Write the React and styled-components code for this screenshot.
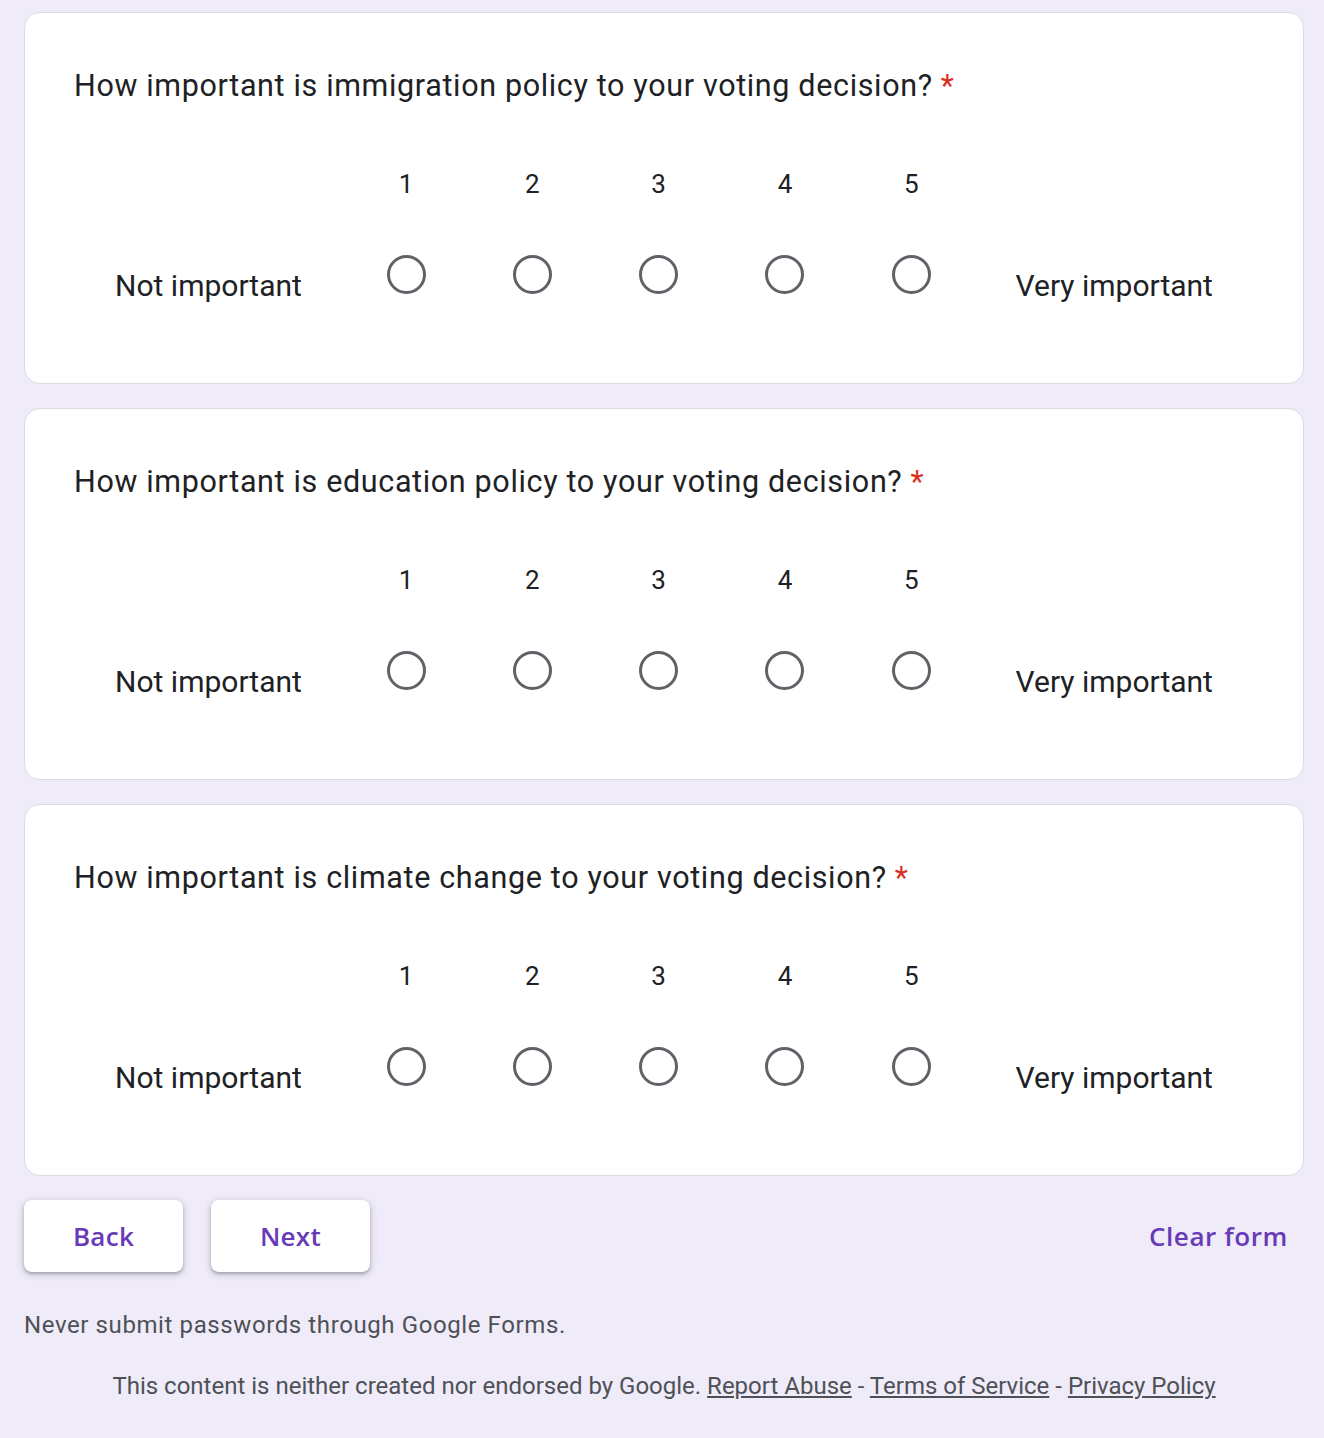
import React from "react";
import styled, { createGlobalStyle } from "styled-components";

const GlobalStyle = createGlobalStyle`
  html, body {
    margin: 0;
    padding: 0;
    background: #f0ebf8;
  }
  body {
    font-family: Roboto, "Liberation Sans", Arial, sans-serif;
    color: #202124;
  }
`;

const Page = styled.div`
  width: 1280px;
  margin-left: 24px;
  padding-top: 12px;
  padding-bottom: 30px;
`;

const Card = styled.div`
  background: #fff;
  border: 1px solid #dadce0;
  border-radius: 16px;
  padding: 50px 49px 62px 49px;
  margin-bottom: 24px;
  box-sizing: border-box;
  height: 372px;
`;

const Title = styled.div`
  font-size: 30.5px;
  line-height: 45px;
  letter-spacing: 0.65px;
  color: #202124;
`;

const Star = styled.span`
  color: #d93025;
  margin-left: 8px;
`;

const Scale = styled.div`
  display: flex;
  margin-top: 55px;
`;

const EndLabel = styled.div`
  flex: 1 1 auto;
  align-self: flex-end;
  margin-bottom: 12px;
  text-align: center;
  font-size: 30px;
  line-height: 45px;
  white-space: nowrap;
`;

const Column = styled.div`
  width: 126.3px;
  flex: none;
  display: flex;
  flex-direction: column;
  align-items: center;
`;

const Number = styled.div`
  font-size: 26px;
  line-height: 40px;
  height: 40px;
  margin-top: 1px;
`;

const RadioCell = styled.div`
  height: 92px;
  margin-top: 24px;
  display: flex;
  align-items: center;
  justify-content: center;
`;

const Radio = styled.div`
  width: 39px;
  height: 39px;
  border: 3.8px solid #5f6368;
  border-radius: 50%;
  box-sizing: border-box;
`;

const Actions = styled.div`
  display: flex;
  align-items: center;
  margin-top: 24px;
  gap: 28px;
`;

const Button = styled.button`
  height: 72px;
  min-width: 159px;
  padding: 0 48px;
  border: none;
  border-radius: 8px;
  background: #fff;
  color: #673ab7;
  font-family: "Open Sans", Roboto, sans-serif;
  font-weight: 600;
  font-size: 26px;
  letter-spacing: 0.3px;
  box-shadow: 0 2px 3px rgba(60, 64, 67, 0.3), 0 2px 6px 2px rgba(60, 64, 67, 0.15);
  cursor: pointer;
`;

const ClearButton = styled.button`
  margin-left: auto;
  margin-right: 16px;
  border: none;
  background: transparent;
  color: #673ab7;
  font-family: "Open Sans", Roboto, sans-serif;
  font-weight: 600;
  font-size: 26px;
  padding: 0;
  letter-spacing: 0.6px;
`;

const Warning = styled.div`
  margin-top: 39px;
  font-size: 24px;
  line-height: 28px;
  color: #4d5156;
  letter-spacing: 0.6px;
`;

const Footer = styled.div`
  margin-top: 33px;
  text-align: center;
  font-size: 24px;
  line-height: 28px;
  color: #4d5156;
`;

const FooterLink = styled.a`
  color: #4d5156;
  text-decoration: underline;
`;

const questions = [
  "How important is immigration policy to your voting decision?",
  "How important is education policy to your voting decision?",
  "How important is climate change to your voting decision?",
];

function Question({ text }) {
  return (
    <Card>
      <Title>
        {text}
        <Star>*</Star>
      </Title>
      <Scale>
        <EndLabel>Not important</EndLabel>
        {[1, 2, 3, 4, 5].map((n) => (
          <Column key={n}>
            <Number>{n}</Number>
            <RadioCell>
              <Radio />
            </RadioCell>
          </Column>
        ))}
        <EndLabel>Very important</EndLabel>
      </Scale>
    </Card>
  );
}

export default function App() {
  return (
    <Page>
      <GlobalStyle />
      {questions.map((q) => (
        <Question key={q} text={q} />
      ))}
      <Actions>
        <Button>Back</Button>
        <Button>Next</Button>
        <ClearButton>Clear form</ClearButton>
      </Actions>
      <Warning>Never submit passwords through Google Forms.</Warning>
      <Footer>
        This content is neither created nor endorsed by Google.{" "}
        <FooterLink>Report Abuse</FooterLink> - <FooterLink>Terms of Service</FooterLink> -{" "}
        <FooterLink>Privacy Policy</FooterLink>
      </Footer>
    </Page>
  );
}
